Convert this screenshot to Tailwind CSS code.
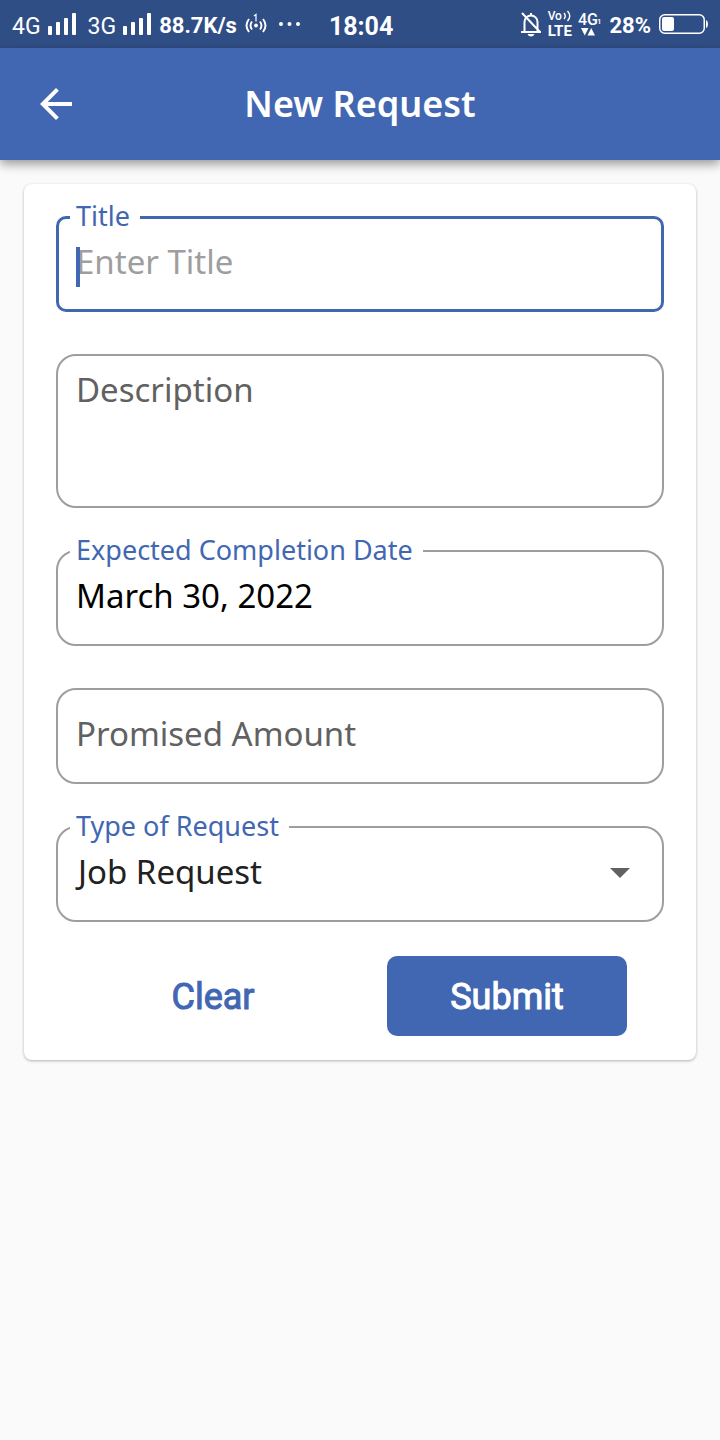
<!DOCTYPE html>
<html lang="en">
<head>
<meta charset="utf-8">
<meta name="viewport" content="width=device-width, initial-scale=1">
<title>New Request</title>
<script src="https://cdn.jsdelivr.net/npm/@tailwindcss/browser@4"></script>
</head>
<body class="min-h-screen bg-[#fafafa] font-['Noto_Sans',sans-serif] text-[#212121]">

<!-- Status bar -->
<div class="flex h-12 items-center justify-between bg-[#304e86] px-3 font-[Roboto,sans-serif] text-white">
  <div class="flex items-center">
    <span class="pt-[6px] text-[23px] leading-6">4G</span>
    <svg class="ml-[7px] h-6 w-7" viewBox="0 0 28 24" fill="currentColor" aria-hidden="true"><rect x="0" y="14" width="4" height="9" rx="1"/><rect x="8" y="10" width="4" height="13" rx="1"/><rect x="16" y="6" width="4" height="17" rx="1"/><rect x="24" y="1" width="4" height="22" rx="1"/></svg>
    <span class="ml-3 pt-[6px] text-[23px] leading-6">3G</span>
    <svg class="ml-[7px] h-6 w-7" viewBox="0 0 28 24" fill="currentColor" aria-hidden="true"><rect x="0" y="14" width="4" height="9" rx="1"/><rect x="8" y="10" width="4" height="13" rx="1"/><rect x="16" y="6" width="4" height="17" rx="1"/><rect x="24" y="1" width="4" height="22" rx="1"/></svg>
    <span class="ml-2 pt-1 text-[22px] leading-6 font-bold">88.7K/s</span>
    <svg class="ml-2 h-6 w-[22px]" viewBox="0 0 22 24" fill="none" stroke="currentColor" stroke-width="1.900" aria-hidden="true"><circle cx="11" cy="13.500" r="1.900" fill="currentColor" stroke="none"/><path d="M7 9.500q-3 4 0 8M15 9.500q3 4 0 8M4 7q-5 6.500 0 13M18 7q5 6.500 0 13"/><path d="M9 4l2-1.500V9.500" stroke-width="1.200"/></svg>
    <svg class="ml-3 h-6 w-[22px]" viewBox="0 0 22 24" fill="currentColor" aria-hidden="true"><circle cx="2" cy="12" r="2"/><circle cx="10.500" cy="12" r="2"/><circle cx="19" cy="12" r="2"/></svg>
    <span class="ml-7 pt-[6px] text-[25px] leading-6 font-bold">18:04</span>
  </div>
  <div class="flex items-center">
    <svg class="h-7 w-5" viewBox="0 0 20 28" fill="none" stroke="currentColor" stroke-width="2" aria-hidden="true"><path d="M3.500 21V12a6.500 6.500 0 0 1 13 0V21M0 22H20M1 3L19 22"/><path d="M10 3V6"/><path d="M6.500 24h7q-1 2.500-3.500 2.500t-3.500-2.500z" fill="currentColor" stroke="none"/></svg>
    <div class="ml-[7px] flex flex-col">
      <span class="flex items-center text-[12px] leading-[14px] font-medium">Vo<svg class="h-3 w-[10px]" viewBox="0 0 10 12" fill="none" stroke="currentColor" stroke-width="1.400" aria-hidden="true"><path d="M2 3q2.500 3 0 6M5.500 1q4.500 5 0 10"/></svg></span>
      <span class="text-[15px] leading-4 font-bold">LTE</span>
    </div>
    <div class="ml-[6px] flex flex-col">
      <span class="flex items-end text-[16px] leading-4 font-medium">4G<span class="-ml-px text-[8px] leading-3">1</span></span>
      <svg class="ml-[3px] h-2 w-[14px]" viewBox="0 0 14 8" fill="currentColor" aria-hidden="true"><path d="M0 0h7.500L3.750 7.500zM6.500 7.500h7.500L10.250 0z"/></svg>
    </div>
    <span class="ml-2 pt-1 text-[22px] leading-6 font-bold">28%</span>
    <svg class="ml-2 h-5 w-[49px]" viewBox="0 0 49 20" fill="none" aria-hidden="true"><rect x=".75" y=".75" width="44.500" height="18.500" rx="5" stroke="currentColor" stroke-width="1.500"/><rect x="3" y="3" width="12" height="14" rx="2" fill="currentColor"/><path d="M47 6q2 1 2 4T47 14z" fill="currentColor"/></svg>
  </div>
</div>

<!-- App bar -->
<header class="grid h-28 grid-cols-[48px_1fr_48px] items-center bg-[#4267b2] px-8 text-white shadow-[0_4px_10px_rgba(0,0,0,0.4)]">
  <button type="button" aria-label="Back" class="flex size-12 items-center justify-center">
    <svg class="size-12" viewBox="0 0 24 24" fill="currentColor" aria-hidden="true"><path d="M20 11H7.830l5.590-5.590L12 4l-8 8 8 8 1.410-1.410L7.830 13H20v-2z"/></svg>
  </button>
  <h1 class="text-center text-[36px] leading-12 font-semibold">New Request</h1>
</header>

<main class="p-6">
  <form class="rounded-lg bg-white px-8 pt-8 pb-6 shadow-[0_1px_3px_rgba(0,0,0,0.3)]">
    <div class="flex flex-col gap-[42px]">
      <div class="relative flex">
        <label for="title" class="absolute -top-4 left-[14px] bg-white pr-[10px] pl-[6px] text-[27px] leading-8 text-[#4267b2]">Title</label>
        <input id="title" type="text" placeholder="Enter Title" class="h-24 w-full rounded-[10px] border-[3px] border-[#4267b2] px-[17px] pb-[6px] text-[33px] caret-transparent outline-none placeholder:text-[#9e9e9e]">
        <span class="absolute top-[31px] left-5 h-10 w-1 bg-[#4267b2]" aria-hidden="true"></span>
      </div>
      <div class="flex">
        <textarea id="description" aria-label="Description" placeholder="Description" class="h-[154px] w-full resize-none rounded-[20px] border-2 border-[#9e9e9e] px-[18px] pt-[10px] text-[33px] leading-12 outline-none placeholder:text-[#616161]"></textarea>
      </div>
      <div class="relative flex">
        <label for="date" class="absolute -top-4 left-[14px] bg-white pr-[10px] pl-[6px] text-[27px] leading-8 text-[#4267b2]">Expected Completion Date</label>
        <input id="date" type="text" value="March 30, 2022" class="h-24 w-full rounded-[20px] border-2 border-[#9e9e9e] px-[18px] pb-[6px] text-[33px] text-black outline-none">
      </div>
      <div class="flex">
        <input id="amount" type="text" aria-label="Promised Amount" placeholder="Promised Amount" class="h-24 w-full rounded-[20px] border-2 border-[#9e9e9e] px-[18px] pb-[6px] text-[33px] outline-none placeholder:text-[#616161]">
      </div>
      <div class="relative flex">
        <label for="type" class="absolute -top-4 left-[14px] bg-white pr-[10px] pl-[6px] text-[27px] leading-8 text-[#4267b2]">Type of Request</label>
        <select id="type" class="h-24 w-full appearance-none rounded-[20px] border-2 border-[#9e9e9e] px-[14px] pb-1 indent-[6px] text-[33px] outline-none">
          <option>Job Request</option>
        </select>
        <svg class="pointer-events-none absolute top-[42px] right-[34px] h-[10px] w-5" viewBox="0 0 20 10" fill="#616161" aria-hidden="true"><path d="M0 0h20L10 10z"/></svg>
      </div>
    </div>
    <div class="mt-[34px] flex justify-between px-[37px] font-[Roboto,sans-serif] text-[36px]">
      <button type="reset" class="h-20 w-60 rounded-[10px] pt-[2px] text-[#4267b2] [-webkit-text-stroke:1px]">Clear</button>
      <button type="submit" class="h-20 w-60 rounded-[10px] bg-[#4267b2] pt-[2px] text-white [-webkit-text-stroke:1px]">Submit</button>
    </div>
  </form>
</main>
</body>
</html>
